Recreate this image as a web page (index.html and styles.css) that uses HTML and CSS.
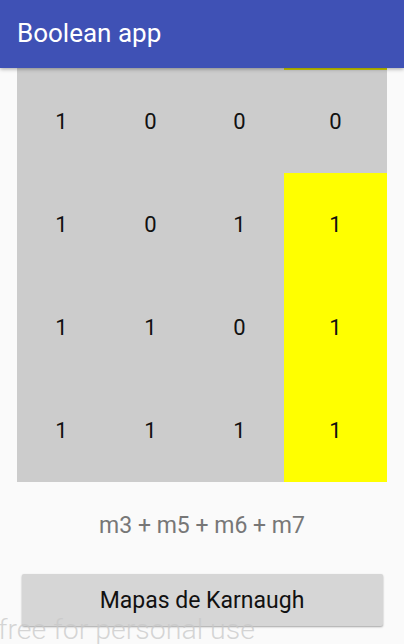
FILE: index.html
```html
<!DOCTYPE html>
<html>
<head>
<meta charset="utf-8">
<link rel="stylesheet" href="styles.css">
</head>
<body>
<header class="appbar"><span class="title">Boolean app</span></header>
<main class="content">
  <div class="kmap">
    <div class="cell strip"></div><div class="cell strip"></div><div class="cell strip"></div><div class="cell strip on"></div>
    <div class="cell">1</div><div class="cell">0</div><div class="cell">0</div><div class="cell">0</div>
    <div class="cell">1</div><div class="cell">0</div><div class="cell">1</div><div class="cell on">1</div>
    <div class="cell">1</div><div class="cell">1</div><div class="cell">0</div><div class="cell on">1</div>
    <div class="cell">1</div><div class="cell">1</div><div class="cell">1</div><div class="cell on">1</div>
  </div>
  <p class="expr">m3 + m5 + m6 + m7</p>
  <button class="btn">Mapas de Karnaugh</button>
</main>
<div class="watermark">free for personal use</div>
</body>
</html>
```
FILE: styles.css
```css
html, body {
  margin: 0;
  padding: 0;
  background: #fafafa;
  font-family: Roboto, "Noto Sans", sans-serif;
  width: 404px;
  height: 644px;
  overflow: hidden;
  position: relative;
}
.appbar {
  height: 68px;
  background: #3f51b5;
  display: flex;
  align-items: center;
  padding-left: 17px;
  box-shadow: 0 1px 4px rgba(0,0,0,0.35);
  position: relative;
  z-index: 2;
}
.title {
  color: #fff;
  font-size: 26px;
  margin-top: -2px;
}
.content {
  display: flex;
  flex-direction: column;
  align-items: center;
}
.kmap {
  width: 370px;
  display: grid;
  grid-template-columns: 89px 89px 89px 103px;
  grid-template-rows: 2px 103px 103px 103px 103px;
  background: #cccccc;
}
.cell {
  display: flex;
  align-items: center;
  justify-content: center;
  font-size: 22px;
  color: #111;
}
.cell.on {
  background: #ffff00;
}
.strip.on {
  background: #cccc00;
}
.expr {
  margin: 26px 0 0;
  height: 36px;
  line-height: 36px;
  font-size: 23px;
  color: #777;
}
.btn {
  margin-top: 30px;
  width: 361px;
  height: 52px;
  background: #d6d6d6;
  border: none;
  border-radius: 2px;
  box-shadow: 0 1px 2px rgba(0,0,0,0.35);
  font-family: Roboto, "Noto Sans", sans-serif;
  font-size: 23px;
  color: #111;
  padding: 0;
}
.watermark {
  position: absolute;
  left: -2px;
  top: 613px;
  font-family: Roboto, sans-serif;
  font-weight: 300;
  font-size: 28.5px;
  color: rgba(200,200,200,0.75);
  white-space: nowrap;
}
```
